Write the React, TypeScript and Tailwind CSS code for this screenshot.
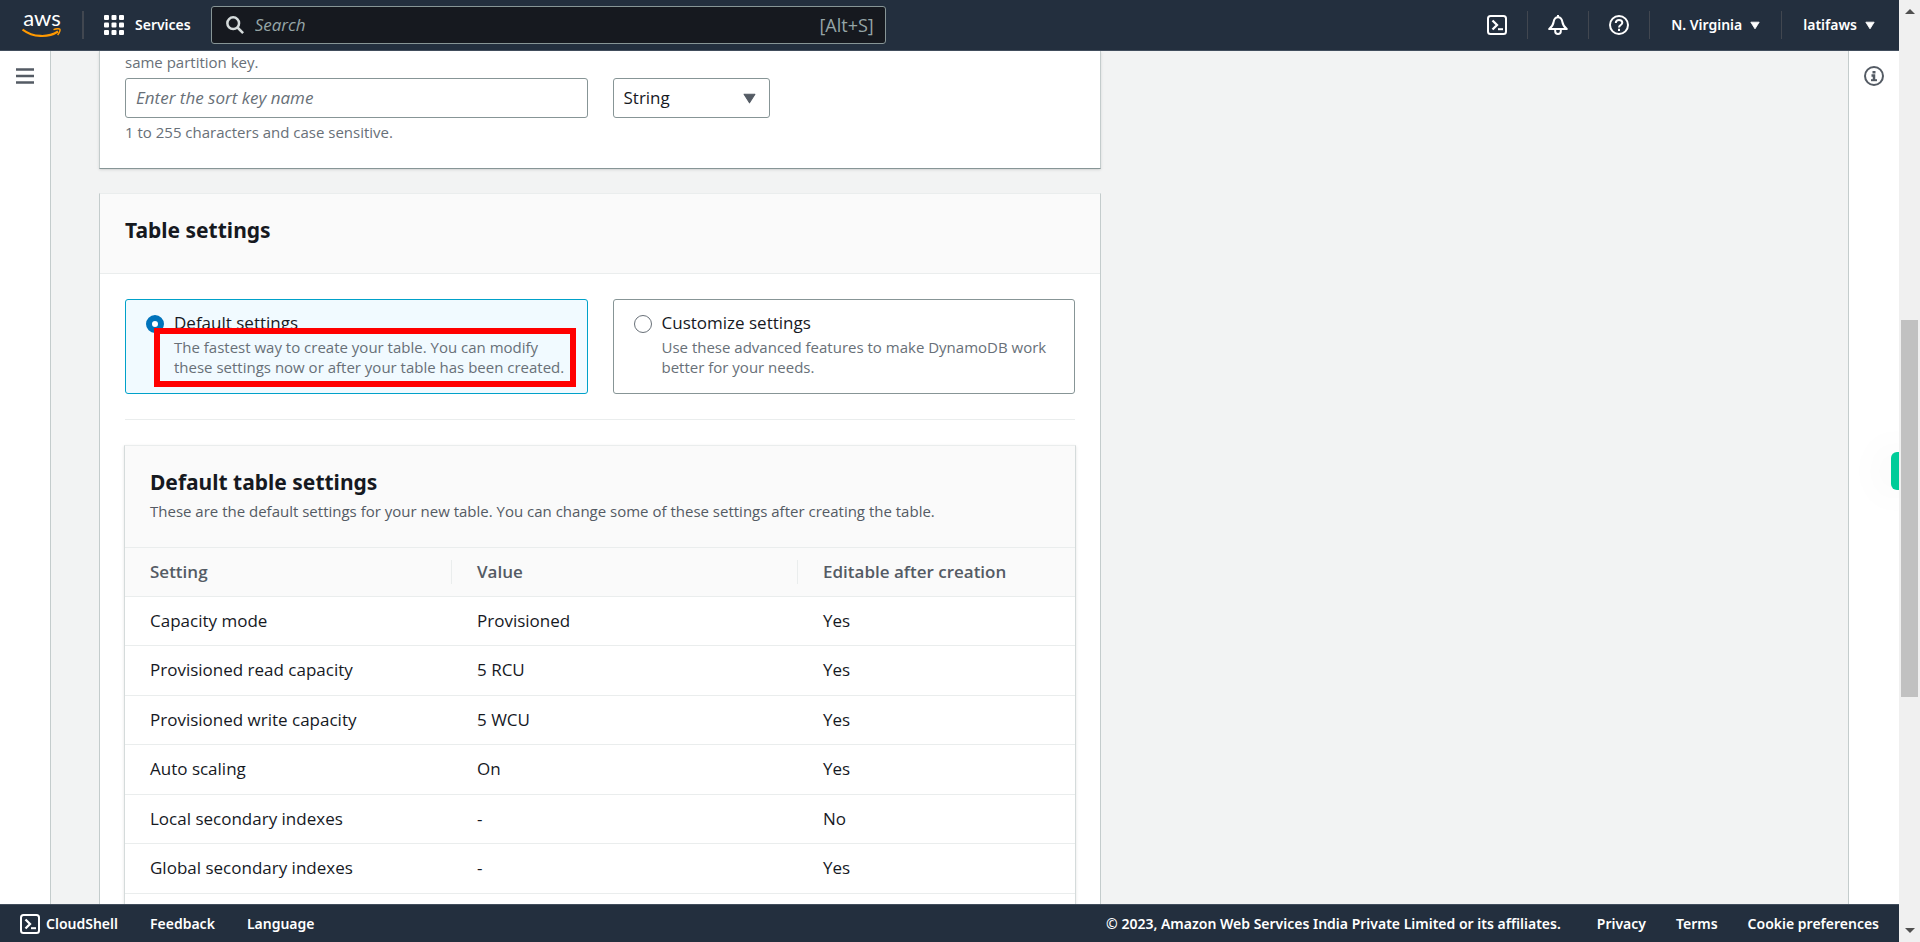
import React, { useState } from 'react';

interface Setting {
  name: string;
  value: string;
  editable: string;
}

interface SettingsOption {
  id: string;
  label: string;
  description: string;
}

const tableSettings: Setting[] = [
  { name: 'Capacity mode', value: 'Provisioned', editable: 'Yes' },
  { name: 'Provisioned read capacity', value: '5 RCU', editable: 'Yes' },
  { name: 'Provisioned write capacity', value: '5 WCU', editable: 'Yes' },
  { name: 'Auto scaling', value: 'On', editable: 'Yes' },
  { name: 'Local secondary indexes', value: '-', editable: 'No' },
  { name: 'Global secondary indexes', value: '-', editable: 'Yes' },
];

const settingsOptions: SettingsOption[] = [
  {
    id: 'default',
    label: 'Default settings',
    description: 'The fastest way to create your table. You can modify these settings now or after your table has been created.',
  },
  {
    id: 'customize',
    label: 'Customize settings',
    description: 'Use these advanced features to make DynamoDB work better for your needs.',
  },
];

const CloudShellIcon: React.FC = () => (
  <svg viewBox="0 0 20 20" className="size-5" fill="none" stroke="currentColor" strokeWidth="2">
    <rect x="1" y="1" width="18" height="18" rx="2.5" />
    <path d="M5.5 5.5 10 10l-4.500 4.500" strokeWidth="2.300" />
    <path d="M11 14.200h5" />
  </svg>
);

const BellIcon: React.FC = () => (
  <svg viewBox="0 0 20 20" className="size-5" fill="none" stroke="currentColor" strokeWidth="2" strokeLinejoin="round">
    <path d="M10 0v2.500" />
    <path d="M10 2.200C7.200 2.200 6 4.200 5.600 7c-.4 3-1.700 4.800-4.400 7h17.600c-2.700-2.200-4-4-4.400-7-.4-2.800-1.600-4.800-4.400-4.800z" />
    <path d="M7.200 14.500v1.700a2.800 2.800 0 0 0 5.600 0v-1.700" />
  </svg>
);

const HelpIcon: React.FC = () => (
  <svg viewBox="0 0 20 20" className="size-5" fill="none" stroke="currentColor" strokeWidth="2">
    <circle cx="10" cy="10" r="9" />
    <path d="M6.800 8c0-1.900 1.300-3.100 3.200-3.100s3.300 1.100 3.300 2.800c0 2.300-3.300 2.300-3.300 4.800" />
    <path d="M10 13.800v2.200" />
  </svg>
);

const InfoIcon: React.FC = () => (
  <svg viewBox="0 0 20 20" className="size-5" fill="none" stroke="currentColor" strokeWidth="2">
    <circle cx="10" cy="10" r="9" />
    <path d="M10 5v2.500" strokeWidth="3" />
    <path d="M7.500 9.500H10v4.500" strokeWidth="2.500" />
    <path d="M7 14.200h6" strokeWidth="2" />
  </svg>
);

const Caret: React.FC<{ className: string }> = ({ className }) => (
  <svg viewBox="0 0 12 10" className={className} fill="currentColor" stroke="currentColor" strokeLinejoin="round">
    <path d="M1 1h10L6 9z" />
  </svg>
);

const Divider: React.FC = () => <span className="h-7 w-px bg-[#414750]" />;

const Header: React.FC = () => (
  <header className="flex h-[51px] shrink-0 items-center border-b border-[#414d5c] bg-[#232f3e] font-['Noto_Sans',sans-serif] text-sm font-semibold text-white">
    <a href="#home" aria-label="AWS home" className="ml-[22px] flex w-10 flex-col items-center">
      <span className="h-[15px] font-[Lato] text-[22px] leading-[9px] font-normal">aws</span>
      <svg viewBox="0 0 40 10" className="h-[10px] w-10" fill="none" stroke="#f90">
        <path d="M.5 1.500C11 9.500 26 10 36 3.500" strokeWidth="2.200" />
        <path d="M31.500 1.600c3-1 5.500-1 6.300-.4.600.8-.2 3.600-2.200 5.800" strokeWidth="1.500" />
      </svg>
    </a>
    <span className="ml-5 h-7 w-0.5 bg-[#414750]" />
    <button className="ml-5 flex items-center gap-[11px]">
      <svg viewBox="0 0 20 20" className="size-5" fill="currentColor">
        {[0, 7.5, 15].map((y) =>
          [0, 7.5, 15].map((x) => <rect key={`${x}-${y}`} x={x} y={y} width="5" height="5" rx="1" />)
        )}
      </svg>
      Services
    </button>
    <label className="ml-5 flex h-[38px] w-[675px] items-center rounded-[3px] border border-[#879596] bg-[#16191f] px-[11px] font-['Open_Sans',sans-serif] text-[17px] font-normal text-[#95a5a6]">
      <svg viewBox="0 0 20 20" className="mx-[3px] size-[18px] shrink-0 text-[#d5dbdb]" fill="none" stroke="currentColor" strokeWidth="2.800">
        <circle cx="8" cy="8" r="6.500" />
        <path d="m12.500 12.500 6.500 6.500" />
      </svg>
      <input
        type="search"
        aria-label="Search"
        placeholder="Search"
        className="ml-2 min-w-0 flex-1 bg-transparent outline-none placeholder:text-[#95a5a6] placeholder:italic"
      />
      <span className="text-lg">[Alt+S]</span>
    </label>
    <nav className="ml-auto flex items-center gap-5 pr-[23px]">
      <button aria-label="CloudShell"><CloudShellIcon /></button>
      <Divider />
      <button aria-label="Notifications"><BellIcon /></button>
      <Divider />
      <button aria-label="Help"><HelpIcon /></button>
      <Divider />
      <button className="flex items-center gap-2 px-px">
        N. Virginia <Caret className="h-[9px] w-[10px]" />
      </button>
      <Divider />
      <button className="flex items-center gap-2 px-px">
        latifaws <Caret className="h-[9px] w-[10px]" />
      </button>
    </nav>
  </header>
);

const SortKeyCard: React.FC = () => (
  <section className="border-x border-b border-x-[#c4cccc] border-b-[#879596] bg-white px-[25px] pt-px pb-[26px] shadow-sm">
    <label htmlFor="sort-key" className="block text-[15px] leading-5 text-[#687078]">same partition key.</label>
    <div className="mt-1.5 grid grid-cols-2 gap-[25px]">
      <input
        id="sort-key"
        type="text"
        placeholder="Enter the sort key name"
        className="h-10 rounded-[3px] border border-[#879596] px-[10px] pb-0.5 text-[17px] outline-none placeholder:text-[#687078] placeholder:italic"
      />
      <div className="relative w-[157px]">
        <select aria-label="Sort key type" className="h-10 w-full appearance-none rounded-[3px] border border-[#879596] bg-white px-[10px] text-[17px]">
          <option>String</option>
          <option>Binary</option>
          <option>Number</option>
        </select>
        <Caret className="pointer-events-none absolute top-[15px] right-[14px] h-[11px] w-[13px] text-[#545b64]" />
      </div>
    </div>
    <p className="mt-1 text-[15px] leading-5 text-[#687078]">1 to 255 characters and case sensitive.</p>
  </section>
);

const SettingsTable: React.FC = () => (
  <section className="-mx-px mt-[25px] border border-[#d5dbdb] border-t-[#eaeded] shadow-sm">
    <div className="bg-[#fafafa] px-[25px] pt-[22px] pb-[26px]">
      <h3 className="font-['Noto_Sans',sans-serif] text-[21px] leading-7 font-bold">Default table settings</h3>
      <p className="mt-[5px] text-[15px] leading-5 text-[#545b64]">
        These are the default settings for your new table. You can change some of these settings after creating the table.
      </p>
    </div>
    <table className="w-full table-fixed border-collapse text-left text-[17px]">
      <thead>
        <tr className="h-[49px] border-y border-[#eaeded] bg-[#fafafa] text-[#545b64]">
          <th className="w-[327px] p-0 font-semibold">
            <div className="border-r border-[#eaeded] pl-[25px] leading-6">Setting</div>
          </th>
          <th className="w-[346px] p-0 font-semibold">
            <div className="border-r border-[#eaeded] pl-[25px] leading-6">Value</div>
          </th>
          <th className="p-0 pl-[25px] leading-6 font-semibold">Editable after creation</th>
        </tr>
      </thead>
      <tbody>
        {tableSettings.map((setting) => (
          <tr key={setting.name} className="h-[49px] border-b border-[#eaeded] even:h-[50px]">
            <td className="pt-0 pr-0 pb-px pl-[25px]">{setting.name}</td>
            <td className="pt-0 pr-0 pb-px pl-[25px]">{setting.value}</td>
            <td className="pt-0 pr-0 pb-px pl-[25px]">{setting.editable}</td>
          </tr>
        ))}
      </tbody>
    </table>
    <div className="h-12" />
  </section>
);

const TableSettingsCard: React.FC = () => {
  const [selected, setSelected] = useState<string>('default');

  return (
    <section className="mt-6 border border-[#c4cccc] border-t-[#eaeded] bg-white">
      <div className="border-b border-[#eaeded] bg-[#fafafa] px-[25px] pt-[22px] pb-[29px]">
        <h2 className="font-['Noto_Sans',sans-serif] text-[21px] leading-7 font-bold">Table settings</h2>
      </div>
      <div className="p-[25px]">
        <div className="grid grid-cols-2 gap-[25px]">
          {settingsOptions.map((option) => (
            <label
              key={option.id}
              className={`relative flex gap-[10px] rounded-[3px] border px-5 pt-[10px] pb-4 ${selected === option.id ? 'border-[#00a1c9] bg-[#f1faff]' : 'border-[#879596] bg-white'}`}
            >
              <input
                type="radio"
                name="table-settings"
                checked={selected === option.id}
                onChange={() => setSelected(option.id)}
                className="mt-[5px] size-[18px] shrink-0 appearance-none rounded-full border border-[#687078] bg-white checked:border-[6px] checked:border-[#0073bb]"
              />
              <span>
                <span className="block text-[17px] leading-[25px]">{option.label}</span>
                <span className="mt-0.5 block text-[15px] leading-5 text-[#687078]">{option.description}</span>
              </span>
              {/* Highlight around the default option's description */}
              {option.id === 'default' && (
                <span className="absolute top-7 left-7 h-[59px] w-[422px] border-[6px] border-[#ff0000]" />
              )}
            </label>
          ))}
        </div>
        <hr className="mt-[25px] border-[#eaeded]" />
        <SettingsTable />
      </div>
    </section>
  );
};

const Footer: React.FC = () => (
  <footer className="flex h-[38px] shrink-0 items-center justify-between border-t border-[#414d5c] bg-[#232f3e] px-5 font-['Noto_Sans',sans-serif] text-sm font-semibold text-white">
    <div className="flex items-center gap-8">
      <button className="flex items-center gap-1.5"><CloudShellIcon />CloudShell</button>
      <a href="#feedback">Feedback</a>
      <button>Language</button>
    </div>
    <div className="flex items-center gap-[30px]">
      <span className="mr-1.5">© 2023, Amazon Web Services India Private Limited or its affiliates.</span>
      <a href="#privacy">Privacy</a>
      <a href="#terms">Terms</a>
      <a href="#cookies">Cookie preferences</a>
    </div>
  </footer>
);

const App: React.FC = () => {
  return (
    <div className="flex h-screen overflow-hidden bg-[#f2f3f3] font-['Open_Sans','Noto_Sans',sans-serif] text-[#16191f]">
      <div className="relative flex min-w-0 flex-1 flex-col">
        <Header />
        <div className="flex min-h-0 flex-1">
          <aside className="w-[51px] shrink-0 border-r border-[#c4cccc] bg-white pt-[17px] pl-4">
            <button aria-label="Open navigation" className="block text-[#545b64]">
              <svg viewBox="0 0 18 16" className="h-4 w-[18px]" stroke="currentColor" strokeWidth="2.400">
                <path d="M0 1.500h18M0 8h18M0 14.500h18" />
              </svg>
            </button>
          </aside>
          <main className="min-w-0 flex-1 overflow-hidden px-12">
            <div className="max-w-[1002px]">
              <SortKeyCard />
              <TableSettingsCard />
            </div>
          </main>
          <aside className="w-[51px] shrink-0 border-l border-[#c4cccc] bg-white pt-[15px] pl-[15px]">
            <button aria-label="Info" className="block text-[#545b64]"><InfoIcon /></button>
          </aside>
        </div>
        <Footer />
        {/* Side tab peeking in at the window's edge */}
        <div className="absolute top-[452px] right-0 h-[38px] w-2 rounded-l-md bg-[#00cc99] shadow-[0_0_40px_rgba(0,0,0,0.15)]" />
      </div>
      {/* Page scrollbar */}
      <div className="relative z-10 flex w-[21px] shrink-0 flex-col items-center justify-between bg-[#f0f0f0] py-[9px] text-[#505050]">
        <svg viewBox="0 0 10 5" className="h-[5px] w-[10px]" fill="currentColor"><path d="M0 5h10L5 0z" /></svg>
        <div className="absolute top-[34%] h-[40%] w-[17px] bg-[#c1c1c1]" />
        <svg viewBox="0 0 10 5" className="h-[5px] w-[10px]" fill="currentColor"><path d="M0 0h10L5 5z" /></svg>
      </div>
    </div>
  );
};

export default App;
